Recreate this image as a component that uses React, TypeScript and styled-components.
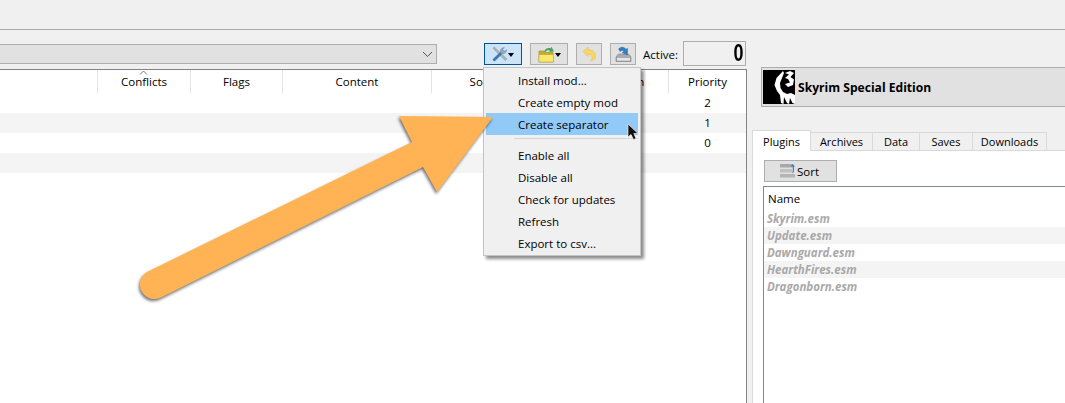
import React from "react";
import styled, { createGlobalStyle } from "styled-components";

const Global = createGlobalStyle`
  html, body { margin: 0; padding: 0; background: #f0f0f0; }
  * { box-sizing: border-box; }
`;

const Page = styled.div`
  position: relative;
  width: 1065px;
  height: 403px;
  overflow: hidden;
  display: flex;
  flex-direction: column;
  background: #f0f0f0;
  font-family: "Open Sans", "Noto Sans", sans-serif;
  font-size: 11.5px;
  color: #000;
`;
const TopBand = styled.div`
  height: 30px;
  flex: none;
  border-bottom: 1px solid #acacac;
`;
const Main = styled.div`
  flex: 1;
  display: flex;
  min-height: 0;
`;
const LeftPane = styled.div`
  position: relative;
  width: 747px;
  flex: none;
  display: flex;
  flex-direction: column;
`;
const Toolbar = styled.div`
  height: 39px;
  flex: none;
  padding: 11px 0 3px;
  display: flex;
  align-items: center;
`;
const Combo = styled.div`
  width: 437px;
  height: 20px;
  margin-top: 1px;
  flex: none;
  display: flex;
  align-items: center;
  justify-content: flex-end;
  padding-right: 3px;
  background: #e1e1e1;
  border: 1px solid #adadad;
  border-left: none;
`;
const ToolButton = styled.div<{ $w: number; $gap: number; $on?: boolean }>`
  width: ${(p) => p.$w}px;
  height: 22px;
  margin-top: 1px;
  margin-left: ${(p) => p.$gap}px;
  flex: none;
  display: flex;
  align-items: center;
  justify-content: center;
  gap: 0;
  background: ${(p) => (p.$on ? "#cce4f7" : "#e1e1e1")};
  border: ${(p) => (p.$on ? "1.5px solid #005499" : "1px solid #adadad")};
`;
const Caret = styled.span`
  width: 0;
  height: 0;
  margin-top: 1px;
  border-left: 3px solid transparent;
  border-right: 3px solid transparent;
  border-top: 4px solid #000;
`;
const ActiveLabel = styled.span`
  margin: 2px 0 0 7px;
  width: 40px;
  flex: none;
  white-space: nowrap;
`;
const Lcd = styled.div`
  width: 63px;
  height: 25px;
  flex: none;
  border: 1px solid #adadad;
  display: flex;
  align-items: center;
  justify-content: flex-end;
  span {
    display: block;
    font-family: "Liberation Sans", sans-serif;
    font-weight: 700;
    font-size: 23px;
    line-height: 23px;
    transform: scaleX(0.78);
    color: #000;
  }
`;
const Table = styled.div`
  flex: 1;
  min-height: 0;
  background: #fff;
  border-top: 1px solid #838383;
  border-right: 1px solid #838383;
`;
const HeaderRow = styled.div`
  display: grid;
  grid-template-columns: 98px 93px 92px 149px 148px 89px 77px;
  height: 23px;
`;
const HeaderCell = styled.div<{ $last?: boolean }>`
  position: relative;
  display: flex;
  align-items: center;
  justify-content: center;
  white-space: nowrap;
  border-right: ${(p) => (p.$last ? "none" : "1px solid #e3e3e3")};
`;
const SortMark = styled.svg`
  position: absolute;
  top: 0;
  left: 41px;
`;
const Row = styled.div<{ $alt?: boolean }>`
  height: 20px;
  display: flex;
  justify-content: flex-end;
  background: ${(p) => (p.$alt ? "#f4f4f4" : "#fff")};
`;
const PriorityCell = styled.div`
  width: 77px;
  padding-bottom: 1px;
  display: flex;
  align-items: center;
  justify-content: center;
`;
const Menu = styled.div`
  position: absolute;
  top: 37px;
  left: 483px;
  width: 158px;
  padding: 1px 2px;
  background: #f0f0f0;
  border: 1px solid #c4c4c4;
  box-shadow: 3px 3px 3px rgba(0, 0, 0, 0.45);
`;
const MenuItem = styled.div<{ $hot?: boolean }>`
  height: 22px;
  padding-left: 32px;
  display: flex;
  align-items: center;
  white-space: nowrap;
  background: ${(p) => (p.$hot ? "#91c9f7" : "transparent")};
`;
const MenuSep = styled.div`
  height: 9px;
  margin-left: 28px;
  padding-top: 3px;
  &::after {
    content: "";
    display: block;
    height: 1px;
    background: #d4d4d4;
  }
`;
const RightPane = styled.div`
  flex: 1;
  min-width: 0;
  display: flex;
  flex-direction: column;
  padding-top: 37px;
`;
const GameBox = styled.div`
  height: 40px;
  margin-left: 14px;
  flex: none;
  display: flex;
  align-items: center;
  gap: 3px;
  padding-left: 1px;
  background: #e1e1e1;
  border: 1px solid #adadad;
  border-right: none;
  font-weight: 700;
  font-size: 12.1px;
`;
const Tabs = styled.div`
  margin: 23px 0 0 5px;
  height: 20px;
  flex: none;
  display: flex;
  align-items: flex-end;
`;
const Tab = styled.div<{ $w: number; $on?: boolean }>`
  width: ${(p) => p.$w}px;
  height: ${(p) => (p.$on ? 21 : 18)}px;
  flex: none;
  display: flex;
  align-items: center;
  justify-content: center;
  font-size: 11px;
  background: ${(p) => (p.$on ? "#fff" : "#f0f0f0")};
  border: 1px solid #d9d9d9;
  border-left: ${(p) => (p.$on ? "1px solid #d9d9d9" : "none")};
  border-bottom: none;
  margin-bottom: ${(p) => (p.$on ? "-1px" : "0")};
  position: relative;
  z-index: ${(p) => (p.$on ? 1 : 0)};
`;
const TabBody = styled.div`
  flex: 1;
  min-height: 0;
  margin-left: 5px;
  background: #fff;
  border-top: 1px solid #d9d9d9;
  border-left: 1px solid #d9d9d9;
  padding: 9px 0 0 10px;
  display: flex;
  flex-direction: column;
`;
const SortButton = styled.div`
  width: 73px;
  height: 22px;
  margin-left: 1px;
  flex: none;
  display: flex;
  align-items: center;
  padding-left: 15px;
  gap: 0;
  background: #e1e1e1;
  border: 1px solid #adadad;
`;
const PluginList = styled.div`
  flex: 1;
  margin-top: 4px;
  border: 1px solid #828790;
  border-right: none;
  border-bottom: none;
`;
const PluginHead = styled.div`
  height: 23px;
  padding-left: 4px;
  display: flex;
  align-items: center;
`;
const PluginRow = styled.div<{ $alt?: boolean }>`
  height: 17px;
  padding-left: 3px;
  display: flex;
  align-items: center;
  font-weight: 700;
  font-style: italic;
  color: #a9a9a9;
  background: ${(p) => (p.$alt ? "#f4f4f4" : "#fff")};
`;
const ArrowSvg = styled.svg`
  position: absolute;
  left: 120px;
  top: 100px;
  filter: drop-shadow(-1px 2px 1.5px rgba(0, 0, 0, 0.55));
`;
const CursorSvg = styled.svg`
  position: absolute;
  left: 627px;
  top: 123px;
`;

const Tools = () => (
  <svg width="16" height="16" viewBox="0 0 16 16">
    <path d="M1 2.2 L2.4 1 L8.5 7 L14.8 12.8 L13.4 14.6 L7 8.6 Z" fill="#aeb4ba" stroke="#858b92" strokeWidth="0.5" />
    <path d="M1.2 13 L8.4 6.2 L10 7.8 L3 14.8 C2 15.6 0.6 14 1.2 13 Z" fill="#3b78b5" stroke="#2c5f94" strokeWidth="0.4" />
    <path d="M8.2 6.4 C7.8 4 9.4 1.6 12.4 1.6 L10.8 3.6 L12.2 5.2 L14.6 3.6 C14.8 6.2 12.4 8.2 9.8 7.8 Z" fill="#8ea6bf" stroke="#6d8299" strokeWidth="0.4" />
  </svg>
);
const FolderIcon = () => (
  <svg width="17" height="17" viewBox="0 0 17 17">
    <path d="M1 5 H6 L7.5 6.5 H15 V16 H1 Z" fill="#c9a92e" stroke="#9c8a3a" strokeWidth="0.6" />
    <path d="M1 16 L1 8.5 H15.5 L15.5 16 Z" fill="#fde969" stroke="#b8a23c" strokeWidth="0.6" />
    <path d="M6 6 C7 2.6 10 1.4 12.5 2.4 L13.5 0.8 L16 5.4 L11 6 L11.8 4.4 C10 3.8 8.2 4.4 7.4 6 Z" fill="#4aa356" />
  </svg>
);
const UndoIcon = () => (
  <svg width="15" height="16" viewBox="0 0 15 16">
    <path d="M1 5.5 L6 1 V3.8 C10.5 3.8 13.6 6.4 13.6 10 C13.6 12.6 11.6 14.6 8.4 15 C10 13.6 10.4 12.2 10 10.6 C9.6 9.2 8 8.3 6 8.3 V10.5 Z" fill="#f6d767" stroke="#e1c05a" strokeWidth="0.6" />
  </svg>
);
const SaveIcon = () => (
  <svg width="17" height="16" viewBox="0 0 17 16">
    <path d="M3.5 8 L1 11 V15.5 H16 V11 L13.5 8 Z" fill="#a9adb2" stroke="#73787d" strokeWidth="0.6" />
    <rect x="2" y="12" width="13" height="2.6" fill="#e4e5e7" />
    <path d="M3.6 3 C5.4 0.6 9.2 0.8 10.8 3.2 L12.6 2.4 L12.4 9 L7.2 6.6 L9 5.6 C8.2 4.4 6.4 4.2 5 5.4 Z" fill="#2f7fc2" stroke="#235f92" strokeWidth="0.4" />
  </svg>
);
const ChevronIcon = () => (
  <svg width="11" height="7" viewBox="0 0 11 7">
    <path d="M1 1 L5.5 5.5 L10 1" fill="none" stroke="#555" strokeWidth="1" />
  </svg>
);
const DragonLogo = () => (
  <svg width="32" height="34" viewBox="0 0 32 34" style={{ flex: "none" }}>
    <rect width="32" height="34" fill="#000" />
    <path d="M20 1 L13.5 8 L11.5 15 L14 21 L17 25 L18 33 L20.5 34 L21 27 L24 33 L26 34 L27 28 L29.5 33 L32 34 L32 25 L28 23 L24 24 L20 22 L17.5 18 L17 13 L21 3 Z" fill="#fff" />
    <path d="M22 3 L27 1 L31 3 L27.5 7 L31 9.5 L30 15 L25 17 L22 14 L27 12.5 L25 9 L22 8 L26 4.5 Z" fill="#fff" />
  </svg>
);
const SortIcon = () => (
  <svg width="17" height="16" viewBox="0 0 17 16">
    <rect x="0" y="1" width="13" height="3.5" fill="#a8a8a8" />
    <rect x="0" y="6" width="12" height="3.5" fill="#c0c0c0" />
    <rect x="0" y="11" width="15" height="3.5" fill="#b4b4b4" />
    <path d="M10.5 3.5 L12.8 1 L15.2 3.5 H14 V8 C14 9.4 13 10 11.6 10 C12.6 9.2 12.8 8.4 12.8 7.4 V3.5 Z" fill="#3f84c5" />
  </svg>
);

const columns = ["", "Conflicts", "Flags", "Content", "Source Game", "Version", "Priority"];
const priorities = [
  { v: "2" },
  { v: "1", alt: true },
  { v: "0" },
  { v: "", alt: true },
];
const menuTop = ["Install mod...", "Create empty mod", "Create separator"];
const menuBottom = ["Enable all", "Disable all", "Check for updates", "Refresh", "Export to csv..."];
const tabs = [
  { t: "Plugins", w: 59, on: true },
  { t: "Archives", w: 62 },
  { t: "Data", w: 47 },
  { t: "Saves", w: 53 },
  { t: "Downloads", w: 74 },
];
const plugins = ["Skyrim.esm", "Update.esm", "Dawnguard.esm", "HearthFires.esm", "Dragonborn.esm"];

export default function App() {
  return (
    <Page>
      <Global />
      <TopBand />
      <Main>
        <LeftPane>
          <Toolbar>
            <Combo>
              <ChevronIcon />
            </Combo>
            <ToolButton $w={38} $gap={47} $on>
              <Tools />
              <Caret />
            </ToolButton>
            <ToolButton $w={38} $gap={8}>
              <FolderIcon />
              <Caret />
            </ToolButton>
            <ToolButton $w={26} $gap={8}>
              <UndoIcon />
            </ToolButton>
            <ToolButton $w={26} $gap={8}>
              <SaveIcon />
            </ToolButton>
            <ActiveLabel>Active:</ActiveLabel>
            <Lcd>
              <span>0</span>
            </Lcd>
          </Toolbar>
          <Table>
            <HeaderRow>
              {columns.map((c, i) => (
                <HeaderCell key={i} $last={i === columns.length - 1}>
                  {c === "Conflicts" && (
                    <SortMark width="9" height="5" viewBox="0 0 9 5">
                      <path d="M1 4.5 L4.5 1 L8 4.5" fill="none" stroke="#777" strokeWidth="1" />
                    </SortMark>
                  )}
                  {c}
                </HeaderCell>
              ))}
            </HeaderRow>
            {priorities.map((p, i) => (
              <Row key={i} $alt={p.alt}>
                <PriorityCell>{p.v}</PriorityCell>
              </Row>
            ))}
          </Table>
          <Menu>
            {menuTop.map((m) => (
              <MenuItem key={m} $hot={m === "Create separator"}>
                {m}
              </MenuItem>
            ))}
            <MenuSep />
            {menuBottom.map((m) => (
              <MenuItem key={m}>{m}</MenuItem>
            ))}
          </Menu>
        </LeftPane>
        <RightPane>
          <GameBox>
            <DragonLogo />
            Skyrim Special Edition
          </GameBox>
          <Tabs>
            {tabs.map((t) => (
              <Tab key={t.t} $w={t.w} $on={t.on}>
                {t.t}
              </Tab>
            ))}
          </Tabs>
          <TabBody>
            <SortButton>
              <SortIcon />
              Sort
            </SortButton>
            <PluginList>
              <PluginHead>Name</PluginHead>
              {plugins.map((p, i) => (
                <PluginRow key={p} $alt={i % 2 === 1}>
                  {p}
                </PluginRow>
              ))}
            </PluginList>
          </TabBody>
        </RightPane>
      </Main>
      <ArrowSvg width="380" height="205" viewBox="120 100 380 205">
        <path d="M412 142 L399 116 L493 117 L437 192 L423 167 L162 297 A14 14 0 0 1 147 272 Z" fill="#ffb354" />
      </ArrowSvg>
      <CursorSvg width="13" height="18" viewBox="0 0 13 18">
        <path d="M1 1 V14 L4 11.5 L6.5 16.5 L9 15.5 L6.8 10.5 L11 10.5 Z" fill="#111" stroke="#fff" strokeWidth="0.6" />
      </CursorSvg>
    </Page>
  );
}
